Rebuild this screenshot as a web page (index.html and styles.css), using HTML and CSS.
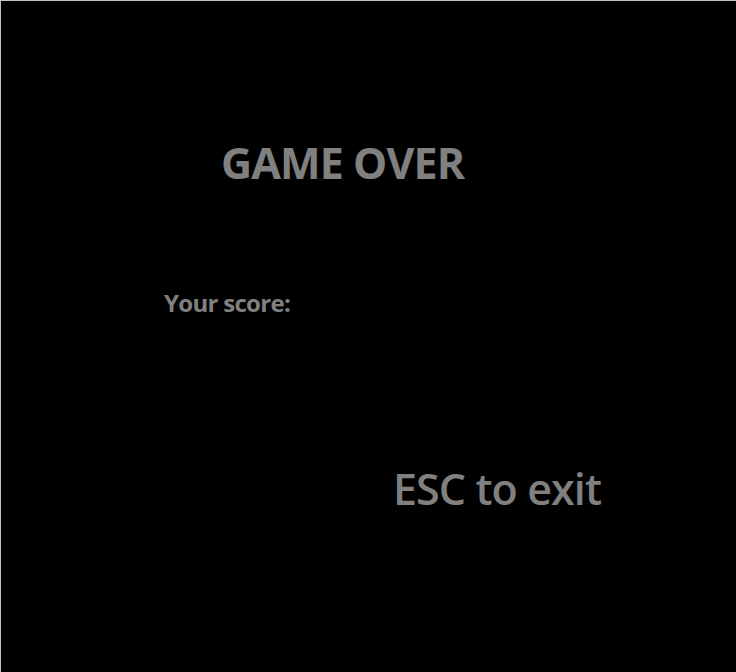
FILE: index.html
```html
<!DOCTYPE html>
<html>
<head>
<meta charset="utf-8">
<link rel="stylesheet" href="styles.css">
</head>
<body>
<div class="screen">
  <div class="title">GAME OVER</div>
  <div class="score">Your score:</div>
  <div class="exit">ESC to exit</div>
</div>
</body>
</html>
```
FILE: styles.css
```css
html, body {
  margin: 0;
  padding: 0;
  background: #000;
}
.screen {
  box-sizing: border-box;
  width: 736px;
  height: 672px;
  background: #000;
  border-top: 1px solid #c0c0c0;
  border-left: 1px solid #c0c0c0;
  color: #808080;
  font-family: "Open Sans", "Liberation Sans", sans-serif;
  display: flex;
  flex-direction: column;
  align-items: flex-start;
}
.title {
  font-size: 43px;
  font-weight: 700;
  line-height: 43px;
  letter-spacing: -0.9px;
  margin-top: 140px;
  margin-left: 220px;
}
.score {
  font-size: 24px;
  font-weight: 700;
  line-height: 24px;
  letter-spacing: -0.7px;
  margin-top: 107px;
  margin-left: 163px;
}
.exit {
  font-size: 43px;
  font-weight: 600;
  line-height: 43px;
  letter-spacing: -0.9px;
  margin-top: 152px;
  margin-left: 392px;
}
```
